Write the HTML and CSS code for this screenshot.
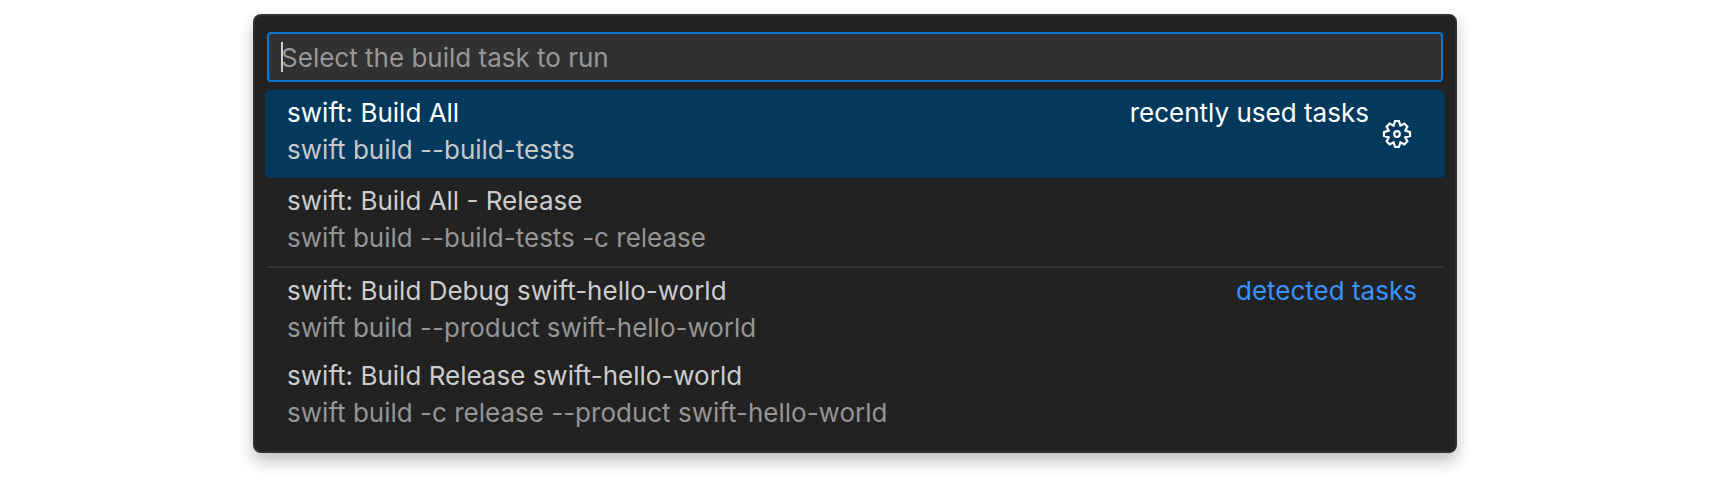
FILE: index.html
```html
<!DOCTYPE html>
<html lang="en">
<head>
<meta charset="utf-8">
<title>Build tasks</title>
<link rel="stylesheet" href="styles.css">
</head>
<body>
<main class="palette">
  <div class="field">
    <input class="search" type="text" aria-label="Select the build task to run" placeholder="Select the build task to run" autofocus>
  </div>
  <ul class="tasks">
    <li class="task selected">
      <div class="text"><div class="name">swift: Build All</div><div class="detail">swift build --build-tests</div></div>
      <span class="group">recently used tasks</span>
      <button class="gear" type="button" aria-label="Configure task">
        <svg viewBox="-16 -16 32 32" width="32" height="32" fill="none" stroke="currentColor" stroke-width="2.2">
          <path d="M-1.900-13H1.900L3.400-8.300 7.400-10.400 10.400-7.400 8.300-3.400 13-1.900V1.900L8.300 3.400 10.400 7.400 7.400 10.400 3.400 8.300 1.900 13H-1.900L-3.400 8.300-7.400 10.400-10.400 7.400-8.300 3.400-13 1.900V-1.900L-8.300-3.400-10.400-7.400-7.400-10.400-3.400-8.300Z"/>
          <circle r="2.8"/>
        </svg>
      </button>
    </li>
    <li class="task">
      <div class="text"><div class="name">swift: Build All - Release</div><div class="detail">swift build --build-tests -c release</div></div>
    </li>
    <li class="task divided">
      <div class="text"><div class="name">swift: Build Debug swift-hello-world</div><div class="detail">swift build --product swift-hello-world</div></div>
      <span class="group">detected tasks</span>
    </li>
    <li class="task">
      <div class="text"><div class="name">swift: Build Release swift-hello-world</div><div class="detail">swift build -c release --product swift-hello-world</div></div>
    </li>
  </ul>
</main>
</body>
</html>
```
FILE: styles.css
```css
* { box-sizing: border-box; }
body {
  margin: 0;
  padding: 14px 0 34px;
  background: #fff;
  font-family: Inter, "Liberation Sans", sans-serif;
  font-size: 26px;
  line-height: 37px;
}
.palette {
  width: 70.4%;
  margin: 0 auto;
  padding: 16px 10px 10px;
  border: 2px solid #303030;
  border-radius: 8px;
  background: #222;
  box-shadow: 0 8px 16px rgba(0, 0, 0, 0.25);
  color: #ccc;
}
.field {
  position: relative;
  margin: 0 2px 8px;
}
/* Steady text cursor at the start of the field */
.field::before {
  content: "";
  position: absolute;
  top: 10px;
  left: 14px;
  width: 2px;
  height: 30px;
  background: #ccc;
}
.search {
  display: block;
  width: 100%;
  height: 50px;
  padding: 0 12px;
  border: 2px solid #0078d4;
  border-radius: 4px;
  outline: 0;
  background: #313131;
  color: #ccc;
  caret-color: transparent;
  font: inherit;
}
.search::placeholder { color: #989898; opacity: 1; }
.tasks { margin: 0; padding: 0; list-style: none; }
.task {
  display: flex;
  min-height: 88px;
  padding: 4px 28px 4px 22px;
  border-radius: 6px;
}
.text { flex: 1; }
.detail { color: #959595; }
.group { color: #3794ff; }
.selected { background: #04395e; color: #fff; }
.selected .detail { color: #c8c8c8; }
.selected .group { color: #fff; }
.divided {
  min-height: 87px;
  margin: 0 2px;
  padding: 4px 26px 4px 20px;
  border-top: 2px solid #333;
  border-radius: 0;
}
.gear {
  align-self: center;
  margin: 0 4px 0 12px;
  padding: 0;
  border: 0;
  background: none;
  color: inherit;
}
.gear svg { display: block; }
```
